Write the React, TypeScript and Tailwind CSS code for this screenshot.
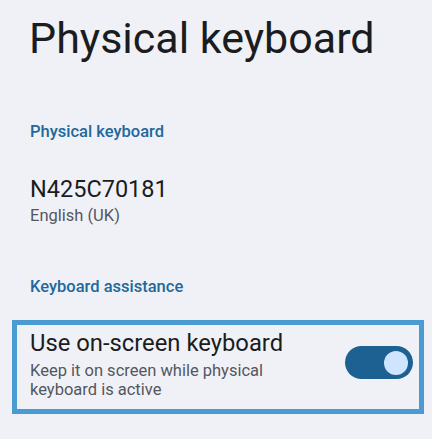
export default function App() {
  return (
    <div
      className="w-[432px] h-[439px] overflow-hidden bg-[#f0f1f6] text-[#1a1c1e]"
      style={{ fontFamily: "Roboto, 'Noto Sans', sans-serif" }}
    >
      {/* Header */}
      <h1 className="pt-[13px] pl-[29px] text-[43px] leading-[50px] font-normal">
        Physical keyboard
      </h1>

      {/* Physical keyboard section */}
      <div className="mt-[59px] pl-[30px] text-[16.5px] leading-[20px] font-medium text-[#22689b]">
        Physical keyboard
      </div>
      <div className="mt-[33px] pl-[30px] text-[23.5px] leading-[28px]">N425C70181</div>
      <div className="mt-[3px] pl-[30px] text-[16.5px] leading-[20px] text-[#53575e]">English (UK)</div>

      {/* Keyboard assistance section */}
      <div className="mt-[51px] pl-[30px] text-[16.5px] leading-[20px] font-medium text-[#22689b]">
        Keyboard assistance
      </div>

      <div className="mt-[23px] ml-[12px] w-[412px] h-[94px] border-[5px] border-[#4a9bd1] flex items-start pl-[13px] pr-[6px] pt-[4px]">
        <div className="flex-1">
          <div className="text-[23.8px] leading-[28px]">Use on-screen keyboard</div>
          <div className="mt-[4px] text-[16.5px] leading-[19px] text-[#53575e] w-[260px]">
            Keep it on screen while physical keyboard is active
          </div>
        </div>
        <div className="mt-[17px] w-[68px] h-[33px] rounded-full bg-[#1c6191] flex items-center justify-end pr-[5px]">
          <div className="w-[24px] h-[24px] rounded-full bg-[#cfe5ff]" />
        </div>
      </div>
    </div>
  );
}
